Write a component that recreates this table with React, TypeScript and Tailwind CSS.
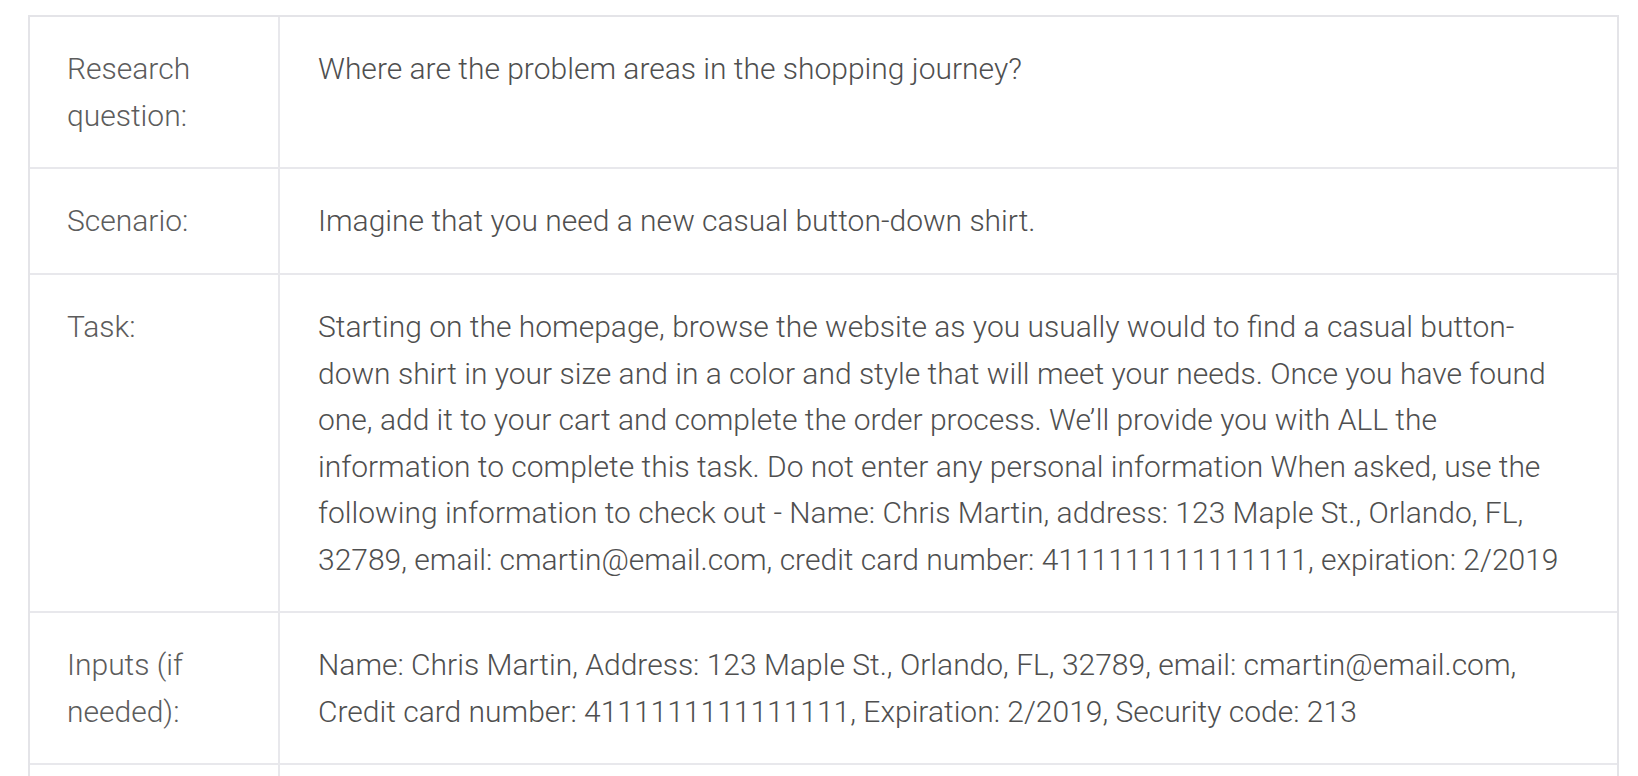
import React from "react";

const rows: { label: string; value: string }[] = [
  {
    label: "Research question:",
    value: "Where are the problem areas in the shopping journey?",
  },
  {
    label: "Scenario:",
    value: "Imagine that you need a new casual button-down shirt.",
  },
  {
    label: "Task:",
    value:
      "Starting on the homepage, browse the website as you usually would to find a casual button-down shirt in your size and in a color and style that will meet your needs. Once you have found one, add it to your cart and complete the order process. We\u2019ll provide you with ALL the information to complete this task. Do not enter any personal information When asked, use the following information to check out - Name: Chris Martin, address: 123 Maple St., Orlando, FL, 32789, email: cmartin@email.com, credit card number: 4111111111111111, expiration: 2/2019",
  },
  {
    label: "Inputs (if needed):",
    value:
      "Name: Chris Martin, Address: 123 Maple St., Orlando, FL, 32789, email: cmartin@email.com, Credit card number: 4111111111111111, Expiration: 2/2019, Security code: 213",
  },
  // next row continues below the fold
  { label: "", value: "" },
];

export default function App() {
  return (
    <div
      className="h-screen bg-white pt-[15px] pl-[28px] overflow-hidden"
      style={{ fontFamily: "Roboto, 'Liberation Sans', sans-serif" }}
    >
      <div className="w-[1591px] border-2 border-[#e4e4e8]">
        {rows.map((row, i) => (
          <div
            key={i}
            className={
              i === 0 ? "flex" : "flex border-t-2 border-[#e8e8ec]"
            }
          >
            <div className="w-[250px] shrink-0 min-h-[104px] pl-[37px] pr-[36px] pt-[29px] pb-[28px] text-[30px] leading-[46.5px] font-light text-[#5c5c5c] border-r-2 border-[#e8e8ec]">
              {row.label}
            </div>
            <div className="flex-1 pl-[38px] pr-[46px] pt-[29px] pb-[28px] text-[30px] leading-[46.5px] font-light text-[#4f4f4f]">
              {row.value}
            </div>
          </div>
        ))}
      </div>
    </div>
  );
}
